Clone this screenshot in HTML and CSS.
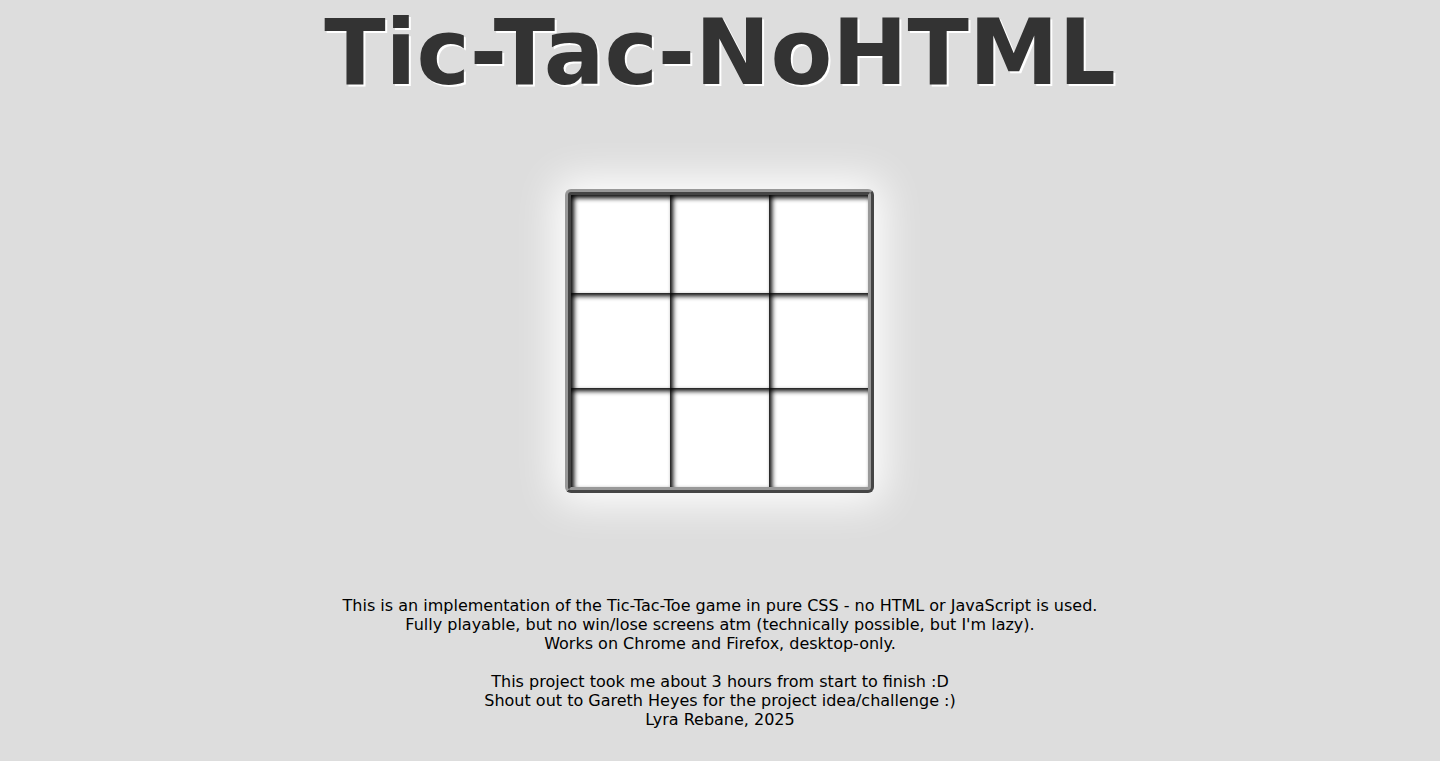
FILE: index.html
```html
<!DOCTYPE html>
<html lang="en">
<head>
<meta charset="utf-8">
<title>Tic-Tac-NoHTML</title>
<link rel="stylesheet" href="styles.css">
</head>
<body>
<main class="page">
  <h1 class="title">Tic-Tac-NoHTML</h1>
  <div class="board">
    <div class="cell"></div><div class="cell"></div><div class="cell"></div>
    <div class="cell"></div><div class="cell"></div><div class="cell"></div>
    <div class="cell"></div><div class="cell"></div><div class="cell"></div>
  </div>
  <div class="info">
    <p>This is an implementation of the Tic-Tac-Toe game in pure CSS - no HTML or JavaScript is used.<br>Fully playable, but no win/lose screens atm (technically possible, but I'm lazy).<br>Works on Chrome and Firefox, desktop-only.</p>
    <p>This project took me about 3 hours from start to finish :D<br>Shout out to Gareth Heyes for the project idea/challenge :)<br>Lyra Rebane, 2025</p>
  </div>
</main>
</body>
</html>
```

FILE: styles.css
```css
html, body {
  margin: 0;
  padding: 0;
  background: #dddddd;
}
body {
  font-family: "DejaVu Sans", sans-serif;
  color: #000;
  text-align: center;
}
.page {
  display: flex;
  flex-direction: column;
  align-items: center;
}
.title {
  margin: 8px 0 0 0;
  font-size: 90px;
  font-weight: bold;
  line-height: 90px;
  color: #333;
  text-shadow: 2px 2px 0 #fff;
}
.board {
  margin-top: 91px;
  margin-right: 2px;
  display: grid;
  grid-template-columns: 99px 99px 99px;
  grid-template-rows: 98px 95px 99px;
  border: 6px ridge #999;
  border-radius: 6px;
  box-shadow: 0 0 40px 10px #fff;
  background: #fff;
}
.cell {
  background: #fff;
  box-shadow: inset 3px 3px 5px #000;
}
.info {
  margin-top: 103px;
  font-size: 16px;
  line-height: 19px;
}
.info p {
  margin: 0 0 19px 0;
}
```
